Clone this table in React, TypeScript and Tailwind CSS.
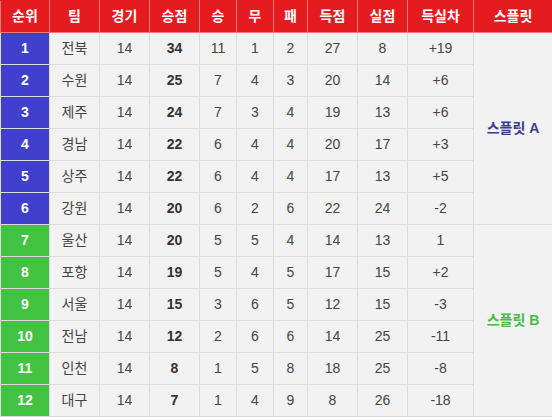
import React from "react";

type Row = {
  rank: number;
  team: string;
  games: number;
  points: number;
  win: number;
  draw: number;
  loss: number;
  gf: number;
  ga: number;
  diff: string;
};

const rows: Row[] = [
  { rank: 1, team: "전북", games: 14, points: 34, win: 11, draw: 1, loss: 2, gf: 27, ga: 8, diff: "+19" },
  { rank: 2, team: "수원", games: 14, points: 25, win: 7, draw: 4, loss: 3, gf: 20, ga: 14, diff: "+6" },
  { rank: 3, team: "제주", games: 14, points: 24, win: 7, draw: 3, loss: 4, gf: 19, ga: 13, diff: "+6" },
  { rank: 4, team: "경남", games: 14, points: 22, win: 6, draw: 4, loss: 4, gf: 20, ga: 17, diff: "+3" },
  { rank: 5, team: "상주", games: 14, points: 22, win: 6, draw: 4, loss: 4, gf: 17, ga: 13, diff: "+5" },
  { rank: 6, team: "강원", games: 14, points: 20, win: 6, draw: 2, loss: 6, gf: 22, ga: 24, diff: "-2" },
  { rank: 7, team: "울산", games: 14, points: 20, win: 5, draw: 5, loss: 4, gf: 14, ga: 13, diff: "1" },
  { rank: 8, team: "포항", games: 14, points: 19, win: 5, draw: 4, loss: 5, gf: 17, ga: 15, diff: "+2" },
  { rank: 9, team: "서울", games: 14, points: 15, win: 3, draw: 6, loss: 5, gf: 12, ga: 15, diff: "-3" },
  { rank: 10, team: "전남", games: 14, points: 12, win: 2, draw: 6, loss: 6, gf: 14, ga: 25, diff: "-11" },
  { rank: 11, team: "인천", games: 14, points: 8, win: 1, draw: 5, loss: 8, gf: 18, ga: 25, diff: "-8" },
  { rank: 12, team: "대구", games: 14, points: 7, win: 1, draw: 4, loss: 9, gf: 8, ga: 26, diff: "-18" },
];

const headers = [
  { label: "순위", w: "w-[49px]" },
  { label: "팀", w: "w-[50px]" },
  { label: "경기", w: "w-[50px]" },
  { label: "승점", w: "w-[50px]" },
  { label: "승", w: "w-[37px]" },
  { label: "무", w: "w-[37px]" },
  { label: "패", w: "w-[34px]" },
  { label: "득점", w: "w-[50px]" },
  { label: "실점", w: "w-[50px]" },
  { label: "득실차", w: "w-[66px]" },
  { label: "스플릿", w: "w-[79px]" },
];

const td = "border border-[#dcdcdc] h-[32px] p-0 text-center";

export default function App() {
  return (
    <div className="w-[552px] h-[420px] bg-white font-['Liberation_Sans','Noto_Sans_CJK_KR',sans-serif]">
      <table className="w-[552px] table-fixed border-collapse text-[14px] text-[#444]">
        <thead>
          <tr>
            {headers.map((h) => (
              <th
                key={h.label}
                className={`${h.w} h-[32px] p-0 text-center bg-[#e51b1f] text-white font-bold text-[14px] border border-[#f07a7a] border-t-[#e51b1f]`}
              >
                {h.label}
              </th>
            ))}
          </tr>
        </thead>
        <tbody className="bg-[#f2f2f2]">
          {rows.map((r) => {
            const top = r.rank <= 6;
            return (
              <tr key={r.rank}>
                <td
                  className={`${td} font-bold text-white ${
                    top ? "bg-[#4040cc]" : "bg-[#44c244]"
                  }`}
                >
                  {r.rank}
                </td>
                <td className={td}>{r.team}</td>
                <td className={td}>{r.games}</td>
                <td className={`${td} font-bold text-[#333]`}>{r.points}</td>
                <td className={td}>{r.win}</td>
                <td className={td}>{r.draw}</td>
                <td className={td}>{r.loss}</td>
                <td className={td}>{r.gf}</td>
                <td className={td}>{r.ga}</td>
                <td className={td}>{r.diff}</td>
                {r.rank === 1 && (
                  <td rowSpan={6} className={`${td} font-bold text-[#3c3c90]`}>
                    스플릿 A
                  </td>
                )}
                {r.rank === 7 && (
                  <td rowSpan={6} className={`${td} font-bold text-[#44bb44]`}>
                    스플릿 B
                  </td>
                )}
              </tr>
            );
          })}
        </tbody>
      </table>
    </div>
  );
}
